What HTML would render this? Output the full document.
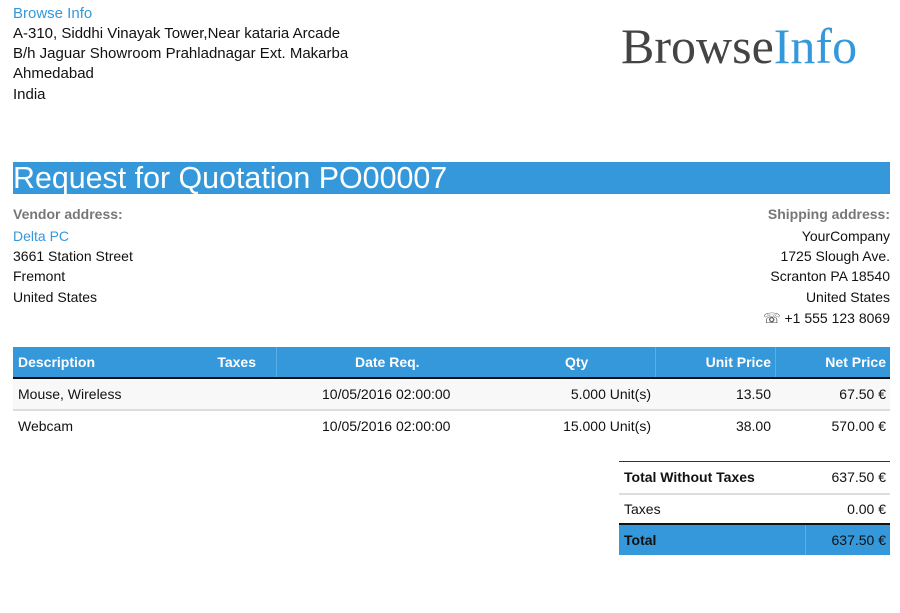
<!DOCTYPE html><html><head><style>
body{margin:0;width:900px;height:613px;background:#fff;font-family:"Liberation Sans",sans-serif;font-size:14px;color:#111;position:relative;overflow:hidden}
.a{position:absolute;white-space:nowrap;line-height:20px}
.b{color:#3498db}
.g{color:#777;font-weight:bold}
.r{text-align:right}
.h{font-size:15px}
</style></head><body>
<div class="a b h" style="left:13px;top:4px">Browse Info</div>
<div class="a h" style="left:13px;top:24px">A-310, Siddhi Vinayak Tower,Near kataria Arcade</div>
<div class="a h" style="left:13px;top:44px">B/h Jaguar Showroom Prahladnagar Ext. Makarba</div>
<div class="a h" style="left:13px;top:64px">Ahmedabad</div>
<div class="a h" style="left:13px;top:85px">India</div>
<div class="a" style="left:621px;top:19px;font-family:'Liberation Serif',serif;font-size:50px;line-height:54px;color:#444">Browse<span class="b">Info</span></div>
<div class="a" style="left:13px;top:162px;width:877px;height:32px;background:#3498db;color:#fff;font-size:30.4px;line-height:33px">Request for Quotation PO00007</div>
<div class="a g" style="left:13px;top:204px">Vendor address:</div>
<div class="a b" style="left:13px;top:226px">Delta PC</div>
<div class="a" style="left:13px;top:246px">3661 Station Street</div>
<div class="a" style="left:13px;top:266px">Fremont</div>
<div class="a" style="left:13px;top:287px">United States</div>
<div class="a g r" style="right:10px;top:204px">Shipping address:</div>
<div class="a r" style="right:10px;top:226px">YourCompany</div>
<div class="a r" style="right:10px;top:246px">1725 Slough Ave.</div>
<div class="a r" style="right:10px;top:266px">Scranton PA 18540</div>
<div class="a r" style="right:10px;top:287px">United States</div>
<div class="a r" style="right:10px;top:308px">&#9743; +1 555 123 8069</div>
<div class="a" style="left:13px;top:347px;width:877px;height:30px;background:#3498db;border-bottom:2px solid #111"></div>
<div class="a" style="left:276px;top:347px;width:1px;height:30px;background:#5aaee6"></div>
<div class="a" style="left:655px;top:347px;width:1px;height:30px;background:#5aaee6"></div>
<div class="a" style="left:775px;top:347px;width:1px;height:30px;background:#5aaee6"></div>
<div class="a" style="left:13px;top:379px;width:877px;height:30px;background:#f8f8f8;border-bottom:2px solid #ddd"></div>
<div class="a" style="color:#fff;font-weight:bold;left:18px;top:352px">Description</div>
<div class="a r" style="color:#fff;font-weight:bold;right:644px;top:352px">Taxes</div>
<div class="a" style="color:#fff;font-weight:bold;left:355px;top:352px">Date Req.</div>
<div class="a" style="color:#fff;font-weight:bold;left:565px;top:352px">Qty</div>
<div class="a r" style="color:#fff;font-weight:bold;right:129px;top:352px">Unit Price</div>
<div class="a r" style="color:#fff;font-weight:bold;right:14px;top:352px">Net Price</div>
<div class="a" style="left:18px;top:384px">Mouse, Wireless</div>
<div class="a" style="left:322px;top:384px">10/05/2016 02:00:00</div>
<div class="a r" style="right:249px;top:384px">5.000 Unit(s)</div>
<div class="a r" style="right:129px;top:384px">13.50</div>
<div class="a r" style="right:14px;top:384px">67.50 €</div>
<div class="a" style="left:18px;top:416px">Webcam</div>
<div class="a" style="left:322px;top:416px">10/05/2016 02:00:00</div>
<div class="a r" style="right:249px;top:416px">15.000 Unit(s)</div>
<div class="a r" style="right:129px;top:416px">38.00</div>
<div class="a r" style="right:14px;top:416px">570.00 €</div>
<div class="a" style="left:619px;top:461px;width:271px;height:1px;background:#333"></div>
<div class="a" style="left:624px;top:467px;font-weight:bold">Total Without Taxes</div>
<div class="a r" style="right:14px;top:467px">637.50 €</div>
<div class="a" style="left:619px;top:493px;width:271px;height:2px;background:#ddd"></div>
<div class="a" style="left:624px;top:499px">Taxes</div>
<div class="a r" style="right:14px;top:499px">0.00 €</div>
<div class="a" style="left:619px;top:523px;width:271px;height:32px;background:#3498db;border-top:2px solid #111;box-sizing:border-box"></div>
<div class="a" style="left:805px;top:525px;width:1px;height:30px;background:#5aaee6"></div>
<div class="a" style="left:624px;top:530px;font-weight:bold">Total</div>
<div class="a r" style="right:14px;top:530px">637.50 €</div>
</body></html>
